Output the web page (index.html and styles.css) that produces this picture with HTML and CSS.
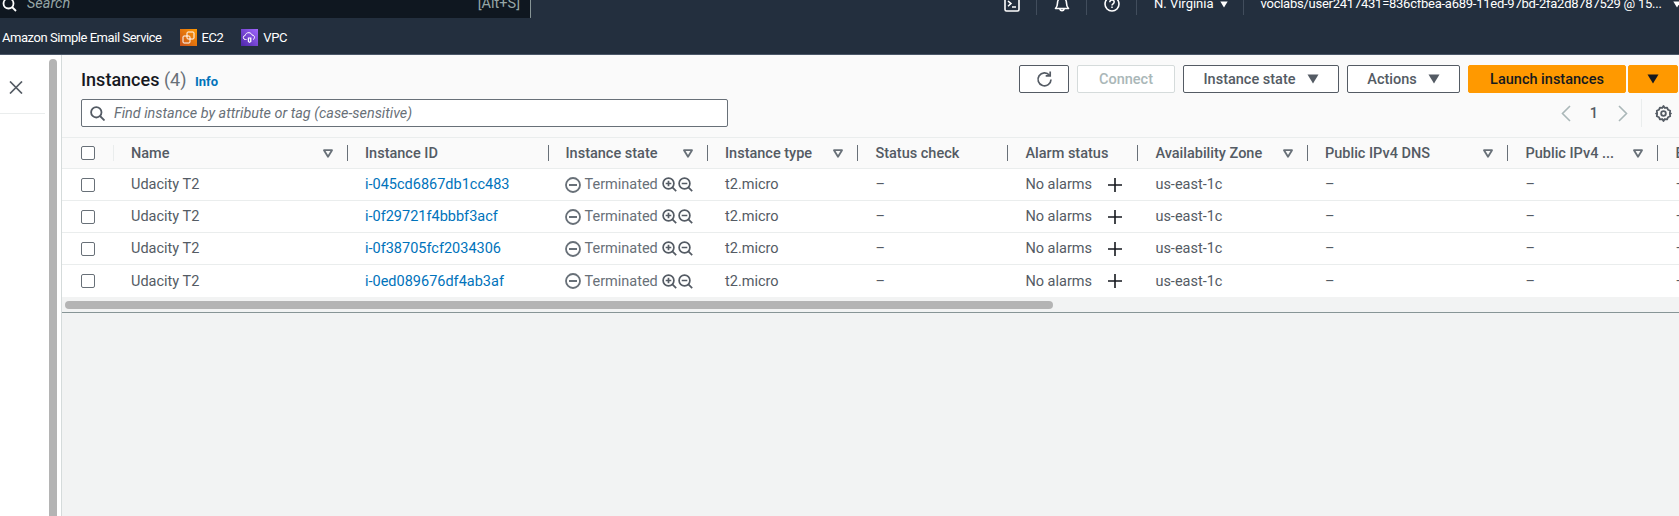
FILE: index.html
```html
<!DOCTYPE html>
<html lang="en">
<head>
  <meta charset="UTF-8">
  <title>Instances | EC2</title>
  <link rel="stylesheet" href="styles.css">
</head>
<body>
  <svg class="defs" width="0" height="0">
    <symbol id="sort" viewBox="0 0 10 9"><path d="M1 1.2h8L5 7.8z" fill="none" stroke="currentColor" stroke-width="1.8" stroke-linejoin="round"/></symbol>
    <symbol id="caret" viewBox="0 0 12 10"><path d="M0.5 0.5h11L6 9.5z" fill="currentColor"/></symbol>
    <symbol id="stopped" viewBox="0 0 16 16"><circle cx="8" cy="8" r="7" fill="none" stroke="currentColor" stroke-width="1.8"/><path d="M4 8h8" stroke="currentColor" stroke-width="2"/></symbol>
    <symbol id="zoomin" viewBox="0 0 15 15"><circle cx="6.5" cy="6.5" r="5.4" fill="none" stroke="currentColor" stroke-width="1.7"/><path d="M3.7 6.5h5.6M6.5 3.7v5.6M10.4 10.4l3.8 3.8" stroke="currentColor" stroke-width="1.7"/></symbol>
    <symbol id="zoomout" viewBox="0 0 15 15"><circle cx="6.5" cy="6.5" r="5.4" fill="none" stroke="currentColor" stroke-width="1.7"/><path d="M3.7 6.5h5.6M10.4 10.4l3.8 3.8" stroke="currentColor" stroke-width="1.7"/></symbol>
    <symbol id="plus" viewBox="0 0 14 14"><path d="M7 0v14M0 7h14" stroke="currentColor" stroke-width="1.6"/></symbol>
  </svg>

  <header class="nav">
    <div class="nav-top">
      <div class="nav-search">
        <svg class="nav-search-icon" width="15" height="15" viewBox="0 0 15 15"><circle cx="6.5" cy="6.5" r="5" fill="none" stroke="#fff" stroke-width="1.8"/><path d="M10 10l4 4" stroke="#fff" stroke-width="1.8"/></svg>
        <span class="nav-search-text">Search</span>
        <span class="nav-search-key">[Alt+S]</span>
      </div>
      <div class="nav-tools">
        <div class="nav-tool">
          <svg width="16" height="16" viewBox="0 0 16 16"><rect x="1" y="1" width="14" height="14" rx="1.5" fill="none" stroke="#fff" stroke-width="1.6"/><path d="M4 5l3 2.6L4 10.200M8 11h4" fill="none" stroke="#fff" stroke-width="1.5"/></svg>
        </div>
        <div class="nav-tool">
          <svg width="16" height="16" viewBox="0 0 16 16"><path d="M1.500 12.500c1.500-1.500 2-3 2-5.500 0-3 2-5 4.500-5s4.500 2 4.500 5c0 2.500 .5 4 2 5.500z" fill="none" stroke="#fff" stroke-width="1.600" stroke-linejoin="round"/><path d="M5.800 13a2.300 2.300 0 0 0 4.400 0" fill="none" stroke="#fff" stroke-width="1.600"/></svg>
        </div>
        <div class="nav-tool">
          <svg width="16" height="16" viewBox="0 0 16 16"><circle cx="8" cy="8" r="7" fill="none" stroke="#fff" stroke-width="1.600"/><path d="M5.800 6.200c0-1.400 1-2.100 2.200-2.100s2.200 .8 2.200 2c0 1.700-2.200 1.700-2.200 3.400" fill="none" stroke="#fff" stroke-width="1.500"/><path d="M8 10.600v1.500" stroke="#fff" stroke-width="1.500"/></svg>
        </div>
        <div class="nav-tool nav-region">N. Virginia <svg class="nav-caret" width="8" height="7"><use href="#caret"/></svg></div>
        <div class="nav-tool nav-account">voclabs/user2417431=836cfbea-a689-11ed-97bd-2fa2d8787529 @ 15... <svg class="nav-caret" width="8" height="7"><use href="#caret"/></svg></div>
      </div>
    </div>
    <div class="nav-links">
      <a class="nav-link nav-link-first">Amazon Simple Email Service</a>
      <a class="nav-link">
        <svg width="17" height="17" viewBox="0 0 17 17">
          <defs><linearGradient id="ec2bg" x1="0" y1="1" x2="1" y2="0"><stop offset="0" stop-color="#c8511b"/><stop offset="1" stop-color="#ff9900"/></linearGradient></defs>
          <rect width="17" height="17" fill="url(#ec2bg)"/>
          <rect x="7" y="3" width="7" height="7" rx="1" fill="none" stroke="#fff" stroke-width="1"/>
          <rect x="3" y="7" width="7" height="7" rx="1" fill="none" stroke="#fff" stroke-width="1"/>
        </svg>
        EC2
      </a>
      <a class="nav-link">
        <svg width="17" height="17" viewBox="0 0 17 17">
          <defs><linearGradient id="vpcbg" x1="0" y1="1" x2="1" y2="0"><stop offset="0" stop-color="#4d27a8"/><stop offset="1" stop-color="#a166ff"/></linearGradient></defs>
          <rect width="17" height="17" fill="url(#vpcbg)"/>
          <path d="M5.500 10.500h-1a2 2 0 0 1-.3-4c.4-2 2-3 3.800-2.800 1.500 .1 2.700 1 3 2.400 1.500 0 2.500 1 2.500 2.300 0 1.100-.7 1.800-1.500 2.100" fill="none" stroke="#fff" stroke-width="1"/>
          <path d="M6.800 8.500h3.600v4.200l-1.800 1.300-1.800-1.300z" fill="#fff"/>
          <path d="M8.600 9.500v3" stroke="#6b3fd1" stroke-width="1"/>
        </svg>
        VPC
      </a>
    </div>
  </header>

  <div class="page">
    <aside class="side">
      <div class="side-head">
        <svg width="14" height="13" viewBox="0 0 14 13"><path d="M1 .5l12 12M13 .5l-12 12" stroke="#545b64" stroke-width="1.700"/></svg>
      </div>
    </aside>
    <div class="vscroll"><div class="vscroll-thumb"></div></div>

    <main class="content">
      <section class="panel">
        <div class="panel-row">
          <h1 class="title">Instances <span class="count">(4)</span> <a class="info">Info</a></h1>
          <div class="actions">
            <button class="btn btn-refresh">
              <svg width="17" height="17" viewBox="0 0 17 17"><path d="M13.500 4.200A6.500 6.500 0 1 0 15 8.500" fill="none" stroke="#545b64" stroke-width="1.700"/><path d="M9.700 4.800h4.500V.5" fill="none" stroke="#545b64" stroke-width="1.700"/></svg>
            </button>
            <button class="btn btn-connect">Connect</button>
            <button class="btn btn-state">Instance state <svg width="12" height="10"><use href="#caret"/></svg></button>
            <button class="btn btn-actions">Actions <svg width="12" height="10"><use href="#caret"/></svg></button>
            <div class="launch">
              <button class="btn btn-primary btn-launch">Launch instances</button>
              <button class="btn btn-primary btn-launch-more"><svg width="12" height="10"><use href="#caret"/></svg></button>
            </div>
          </div>
        </div>
        <div class="panel-row">
          <div class="filter">
            <svg width="15" height="15" viewBox="0 0 15 15"><circle cx="6.300" cy="6.300" r="5.200" fill="none" stroke="#545b64" stroke-width="1.800"/><path d="M10 10l4.500 4.500" stroke="#545b64" stroke-width="1.800"/></svg>
            <span class="filter-text">Find instance by attribute or tag (case-sensitive)</span>
          </div>
          <div class="pager">
            <svg width="10" height="17" viewBox="0 0 10 17"><path d="M9 1L1.500 8.500 9 16" fill="none" stroke="#aab7b8" stroke-width="1.600"/></svg>
            <span class="pager-num">1</span>
            <svg width="10" height="17" viewBox="0 0 10 17"><path d="M1 1l7.500 7.500L1 16" fill="none" stroke="#aab7b8" stroke-width="1.600"/></svg>
            <div class="pager-gear">
              <svg width="17" height="17" viewBox="0 0 16 16"><circle cx="8" cy="8" r="2.200" fill="none" stroke="#545b64" stroke-width="1.700"/><path d="M8 1l1.200 1.800 2.200-.3 .9 2 2 .9-.3 2.200L15 8l-1 .4.300 2.200-2 .9-.9 2-2.200-.3L8 15l-1.200-1.800-2.200 .3-.9-2-2-.9.300-2.200L1 8l1-.4-.3-2.200 2-.9 .9-2 2.200 .3z" fill="none" stroke="#545b64" stroke-width="1.700" stroke-linejoin="round"/></svg>
            </div>
          </div>
        </div>
      </section>

      <section class="table">
        <div class="table-head grid">
          <div class="check-head"><input type="checkbox" class="check"></div>
          <div class="th"><span>Name</span><svg class="sort"><use href="#sort"/></svg></div>
          <div class="th"><span>Instance ID</span></div>
          <div class="th"><span>Instance state</span><svg class="sort"><use href="#sort"/></svg></div>
          <div class="th"><span>Instance type</span><svg class="sort"><use href="#sort"/></svg></div>
          <div class="th"><span>Status check</span></div>
          <div class="th"><span>Alarm status</span></div>
          <div class="th"><span>Availability Zone</span><svg class="sort"><use href="#sort"/></svg></div>
          <div class="th"><span>Public IPv4 DNS</span><svg class="sort"><use href="#sort"/></svg></div>
          <div class="th"><span>Public IPv4 ...</span><svg class="sort"><use href="#sort"/></svg></div>
          <div class="th"><span>Elastic IP</span></div>
        </div>

        <div class="row grid">
          <div class="td td-check"><input type="checkbox" class="check"></div>
          <div class="td">Udacity T2</div>
          <div class="td"><a class="link">i-045cd6867db1cc483</a></div>
          <div class="td state"><svg class="state-icon"><use href="#stopped"/></svg><span class="state-text">Terminated</span><svg class="zoom"><use href="#zoomin"/></svg><svg class="zoom"><use href="#zoomout"/></svg></div>
          <div class="td">t2.micro</div>
          <div class="td">–</div>
          <div class="td alarm"><span>No alarms</span><svg class="plus"><use href="#plus"/></svg></div>
          <div class="td">us-east-1c</div>
          <div class="td">–</div>
          <div class="td">–</div>
          <div class="td">–</div>
        </div>
        <div class="row grid">
          <div class="td td-check"><input type="checkbox" class="check"></div>
          <div class="td">Udacity T2</div>
          <div class="td"><a class="link">i-0f29721f4bbbf3acf</a></div>
          <div class="td state"><svg class="state-icon"><use href="#stopped"/></svg><span class="state-text">Terminated</span><svg class="zoom"><use href="#zoomin"/></svg><svg class="zoom"><use href="#zoomout"/></svg></div>
          <div class="td">t2.micro</div>
          <div class="td">–</div>
          <div class="td alarm"><span>No alarms</span><svg class="plus"><use href="#plus"/></svg></div>
          <div class="td">us-east-1c</div>
          <div class="td">–</div>
          <div class="td">–</div>
          <div class="td">–</div>
        </div>
        <div class="row grid">
          <div class="td td-check"><input type="checkbox" class="check"></div>
          <div class="td">Udacity T2</div>
          <div class="td"><a class="link">i-0f38705fcf2034306</a></div>
          <div class="td state"><svg class="state-icon"><use href="#stopped"/></svg><span class="state-text">Terminated</span><svg class="zoom"><use href="#zoomin"/></svg><svg class="zoom"><use href="#zoomout"/></svg></div>
          <div class="td">t2.micro</div>
          <div class="td">–</div>
          <div class="td alarm"><span>No alarms</span><svg class="plus"><use href="#plus"/></svg></div>
          <div class="td">us-east-1c</div>
          <div class="td">–</div>
          <div class="td">–</div>
          <div class="td">–</div>
        </div>
        <div class="row grid row-last">
          <div class="td td-check"><input type="checkbox" class="check"></div>
          <div class="td">Udacity T2</div>
          <div class="td"><a class="link">i-0ed089676df4ab3af</a></div>
          <div class="td state"><svg class="state-icon"><use href="#stopped"/></svg><span class="state-text">Terminated</span><svg class="zoom"><use href="#zoomin"/></svg><svg class="zoom"><use href="#zoomout"/></svg></div>
          <div class="td">t2.micro</div>
          <div class="td">–</div>
          <div class="td alarm"><span>No alarms</span><svg class="plus"><use href="#plus"/></svg></div>
          <div class="td">us-east-1c</div>
          <div class="td">–</div>
          <div class="td">–</div>
          <div class="td">–</div>
        </div>

        <div class="hscroll"><div class="hscroll-thumb"></div></div>
      </section>
    </main>
  </div>
</body>
</html>
```

FILE: styles.css
```css
:root {
  --nav: #232f3e;
  --text: #16191f;
  --muted: #545b64;
  --grey: #687078;
  --line: #eaeded;
  --panel: #fafafa;
  --page: #f2f3f3;
  --link: #0073bb;
  --cols: 52px 234px 200.5px 159.5px 150.4px 150px 130px 169.6px 200.5px 150px 200px;
}

html, body {
  margin: 0;
  height: 100%;
}

body {
  font-family: Roboto, "Liberation Sans", sans-serif;
  font-size: 15px;
  color: var(--text);
  background: #fff;
  overflow: hidden;
  display: flex;
  flex-direction: column;
}

.defs {
  display: none;
}

/* top nav */
.nav {
  background: var(--nav);
  height: 54px;
  border-bottom: 1px solid #4b5768;
  flex-shrink: 0;
  color: #fff;
}

.nav-top {
  display: flex;
  height: 18px;
  overflow: hidden;
}

.nav-search {
  width: 531px;
  flex-shrink: 0;
  height: 19px;
  box-sizing: border-box;
  background: #0f1720;
  border-right: 1px solid #879596;
  border-bottom: 1px solid #879596;
  border-bottom-right-radius: 2px;
  display: flex;
  align-items: flex-end;
  padding: 0 10px 6px 2px;
  font-size: 14.500px;
  line-height: 16px;
  color: #95a5a6;
}

.nav-search-icon {
  margin-right: 10px;
}

.nav-search-text {
  font-style: italic;
}

.nav-search-key {
  margin-left: auto;
}

.nav-tools {
  display: flex;
  flex-shrink: 0;
  margin-left: 456px;
  margin-top: -4px;
  height: 19px;
  font-size: 13px;
  line-height: 16px;
}

.nav-tool {
  height: 19px;
  display: flex;
  gap: 6px;
  padding: 0 16px 0 17px;
  border-right: 1px solid #414d5c;
  white-space: nowrap;
}

.nav-caret {
  margin-top: 5px;
  color: #fff;
}

.nav-region {
  gap: 6px;
  padding-right: 15px;
}

.nav-account {
  border-right: none;
  gap: 11px;
  padding-right: 0;
  letter-spacing: -0.25px;
}

.nav-links {
  display: flex;
  align-items: center;
  height: 36px;
  padding-left: 2px;
  padding-top: 3px;
  box-sizing: border-box;
  gap: 18px;
  font-size: 13px;
  letter-spacing: -0.45px;
}

.nav-link {
  display: flex;
  align-items: center;
  gap: 5px;
  white-space: nowrap;
}

/* left rail */
.page {
  flex: 1;
  display: flex;
  min-height: 0;
}

.side {
  width: 49px;
  flex-shrink: 0;
}

.side-head {
  width: 45px;
  height: 59px;
  box-sizing: border-box;
  padding: 25px 0 0 9px;
  border-bottom: 1px solid var(--line);
}

.vscroll {
  width: 8px;
  margin-right: 4px;
  padding-top: 4px;
  flex-shrink: 0;
  display: flex;
}

.vscroll-thumb {
  flex: 1;
  background: #b4b4b4;
  border-radius: 4px 4px 0 0;
}

/* main panel */
.content {
  flex: 1;
  min-width: 0;
  border-left: 1px solid #d5dbdb;
  background: var(--page);
  overflow: hidden;
}

.panel {
  background: var(--panel);
  height: 83px;
  box-sizing: border-box;
  padding: 10px 1px 0 19px;
  border-bottom: 1px solid var(--line);
  display: flex;
  flex-direction: column;
  gap: 6px;
}

.panel-row {
  display: flex;
  align-items: center;
  height: 28px;
}

.title {
  margin: 0;
  font-size: 18px;
  font-weight: 500;
  white-space: nowrap;
}

.count {
  font-weight: 400;
  color: var(--grey);
}

.info {
  font-size: 13px;
  font-weight: 700;
  color: var(--link);
  margin-left: 4px;
}

.actions {
  margin-left: auto;
  display: flex;
  gap: 8px;
}

.btn {
  height: 28px;
  box-sizing: border-box;
  border: 1px solid var(--muted);
  border-radius: 2px;
  background: #fff;
  color: var(--muted);
  font-family: inherit;
  font-size: 14.500px;
  font-weight: 500;
  padding: 0;
  display: flex;
  align-items: center;
  justify-content: center;
  gap: 11px;
}

.btn-refresh { width: 50px; }
.btn-state { width: 156px; }
.btn-actions { width: 113px; }

.btn-connect {
  width: 98px;
  color: #aab7b8;
  border-color: #d5dbdb;
}

.launch {
  display: flex;
  gap: 2px;
}

.btn-primary {
  background: #ff9900;
  border-color: #ff9900;
  color: var(--text);
}

.btn-launch { width: 158px; }
.btn-launch-more { width: 50px; }

.filter {
  width: 647px;
  height: 28px;
  box-sizing: border-box;
  border: 1px solid var(--grey);
  border-radius: 2px;
  background: #fff;
  display: flex;
  align-items: center;
  padding-left: 8px;
  gap: 9px;
}

.filter-text {
  font-style: italic;
  font-size: 14.400px;
  color: var(--grey);
}

.pager {
  margin-left: auto;
  display: flex;
  align-items: center;
  height: 28px;
}

.pager-num {
  font-size: 14.500px;
  font-weight: 500;
  color: var(--muted);
  margin: 0 20px 0 19px;
}

.pager-gear {
  margin-left: 13px;
  height: 28px;
  padding-left: 13px;
  padding-right: 6px;
  border-left: 1px solid var(--line);
  display: flex;
  align-items: center;
}

/* table */
.grid {
  display: grid;
  grid-template-columns: var(--cols);
}

.table-head {
  height: 31px;
  box-sizing: border-box;
  background: var(--panel);
  border-bottom: 1px solid var(--line);
  align-items: center;
}

.check-head {
  height: 16px;
  padding-left: 19px;
  display: flex;
  align-items: center;
  border-right: 1px solid var(--line);
}

.th {
  height: 16px;
  box-sizing: border-box;
  display: flex;
  align-items: center;
  justify-content: space-between;
  padding: 0 14px 0 17px;
  border-right: 1px solid var(--grey);
  font-size: 14.500px;
  font-weight: 500;
  color: var(--muted);
  white-space: nowrap;
}

.sort {
  width: 10px;
  height: 9px;
  color: var(--grey);
}

.row {
  height: 32px;
  box-sizing: border-box;
  background: #fff;
  border-bottom: 1px solid var(--line);
  align-items: center;
}

.row-last {
  border-bottom: none;
}

.td {
  padding-left: 17px;
  font-size: 14.500px;
  color: var(--muted);
  white-space: nowrap;
}

.td-check {
  padding-left: 19px;
  display: flex;
  align-items: center;
}

.check {
  appearance: none;
  width: 14px;
  height: 14px;
  margin: 0;
  border: 1px solid var(--grey);
  border-radius: 2px;
  background: #fff;
}

.link {
  color: var(--link);
}

.state {
  display: flex;
  align-items: center;
  color: var(--grey);
}

.state-icon {
  width: 16px;
  height: 16px;
  margin-right: 4px;
  margin-left: -1px;
}

.state-text {
  margin-right: 4px;
}

.zoom {
  width: 15px;
  height: 15px;
  margin-right: 1px;
  color: var(--muted);
}

.alarm {
  display: flex;
  align-items: center;
}

.plus {
  width: 14px;
  height: 14px;
  margin-left: 16px;
  color: var(--text);
}

.hscroll {
  height: 16px;
  box-sizing: border-box;
  padding: 4px 0 0 3px;
  background: var(--page);
  border-bottom: 1px solid #879596;
}

.hscroll-thumb {
  width: 988px;
  height: 8px;
  background: #b4b4b4;
  border-radius: 4px;
}
```
